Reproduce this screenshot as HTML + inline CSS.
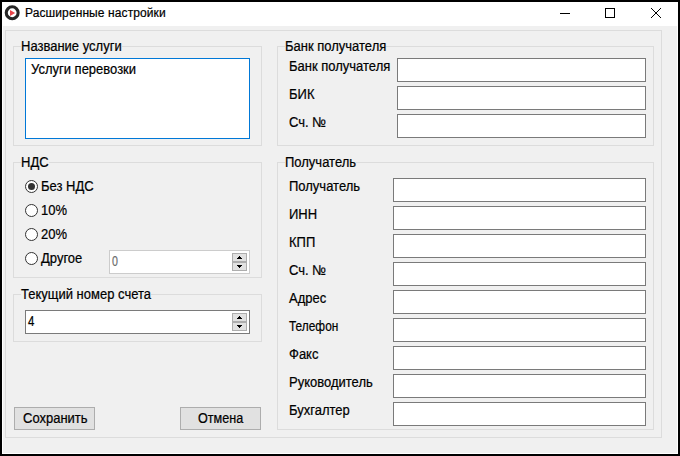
<!DOCTYPE html>
<html><head><meta charset="utf-8">
<style>
html,body{margin:0;padding:0;}
body{width:680px;height:456px;background:#000;position:relative;overflow:hidden;font-family:"Liberation Sans",sans-serif;}
div{position:absolute;box-sizing:border-box;}
.win{left:2px;top:2px;width:676px;height:452px;background:#fff;}
.client{left:3px;top:26px;width:674px;height:427px;background:#f0f0f0;}
.panel{left:5px;top:30px;width:657px;height:408px;border:1px solid #dcdcdc;}
.gb{border:1px solid #dcdcdc;}
.gt{background:#f0f0f0;padding:0;}
.t{font-size:13px;line-height:15px;color:#000;white-space:nowrap;transform:scaleY(1.1);transform-origin:0 12px;-webkit-text-stroke:0.2px currentColor;}
.tb{background:#fff;border:1px solid #7a7a7a;}
.btn{background:#e1e1e1;border:1px solid #adadad;}
.sp{background:#e1e1e1;border:1px solid #adadad;width:15px;height:9px;}
</style></head><body>
<div class="win"></div>
<!-- title bar -->
<svg style="position:absolute;left:0;top:0" width="680" height="26">
  <circle cx="12.2" cy="12.75" r="5.95" fill="#fff" stroke="#262626" stroke-width="3.1"/>
  <path d="M10 10 L15.2 13 L10 16 Z" fill="#e8454a"/>
  <rect x="560" y="13" width="10" height="1" fill="#000"/>
  <rect x="605.5" y="8.5" width="9" height="9" fill="none" stroke="#000" stroke-width="1"/>
  <g fill="#000"><rect x="651" y="8" width="1" height="1"/><rect x="660" y="8" width="1" height="1"/><rect x="652" y="9" width="1" height="1"/><rect x="659" y="9" width="1" height="1"/><rect x="653" y="10" width="1" height="1"/><rect x="658" y="10" width="1" height="1"/><rect x="654" y="11" width="1" height="1"/><rect x="657" y="11" width="1" height="1"/><rect x="655" y="12" width="1" height="1"/><rect x="656" y="12" width="1" height="1"/><rect x="656" y="13" width="1" height="1"/><rect x="655" y="13" width="1" height="1"/><rect x="657" y="14" width="1" height="1"/><rect x="654" y="14" width="1" height="1"/><rect x="658" y="15" width="1" height="1"/><rect x="653" y="15" width="1" height="1"/><rect x="659" y="16" width="1" height="1"/><rect x="652" y="16" width="1" height="1"/><rect x="660" y="17" width="1" height="1"/><rect x="651" y="17" width="1" height="1"/></g>
</svg>
<div class="t" style="left:25px;top:6px;font-size:12px;transform:none;letter-spacing:0.1px;">Расширенные настройки</div>
<div class="client"></div>
<div class="panel"></div>

<!-- Название услуги -->
<div class="gb" style="left:13px;top:46px;width:249px;height:100px;"></div>
<div class="t gt" style="left:21px;top:39px;">Название услуги</div>
<div class="tb" style="left:25px;top:58px;width:225px;height:81px;border-color:#0078d7;"></div>
<div class="t" style="left:31px;top:62px;">Услуги перевозки</div>

<!-- НДС -->
<div class="gb" style="left:13px;top:162px;width:249px;height:116px;"></div>
<div class="t gt" style="left:21px;top:155px;">НДС</div>

<!-- Текущий номер счета -->
<div class="gb" style="left:13px;top:294px;width:249px;height:48px;"></div>
<div class="t gt" style="left:21px;top:287px;">Текущий номер счета</div>
<div class="tb" style="left:25px;top:310px;width:225px;height:24px;"></div>
<div class="t" style="left:28px;top:314px;transform:scale(0.88,1.1);">4</div>
<div class="sp" style="left:232px;top:313px;"></div>
<div class="sp" style="left:232px;top:322px;"></div>

<!-- disabled updown -->
<div class="tb" style="left:109px;top:250px;width:141px;height:24px;border-color:#cccccc;"></div>
<div class="t" style="left:112px;top:254px;color:#6d6d6d;transform:scale(0.82,1.1);">0</div>
<div class="sp" style="left:232px;top:253px;"></div>
<div class="sp" style="left:232px;top:262px;"></div>

<!-- buttons -->
<div class="btn" style="left:14px;top:407px;width:81px;height:23px;"></div>
<div class="t" style="left:23px;top:411px;">Сохранить</div>
<div class="btn" style="left:180px;top:407px;width:81px;height:23px;"></div>
<div class="t" style="left:197.5px;top:411px;transform:scale(0.97,1.1);">Отмена</div>

<!-- Банк получателя -->
<div class="gb" style="left:277px;top:46px;width:377px;height:100px;"></div>
<div class="t gt" style="left:285px;top:39px;">Банк получателя</div>
<div class="t" style="left:289px;top:59px;">Банк получателя</div>
<div class="t" style="left:289px;top:87px;">БИК</div>
<div class="t" style="left:289px;top:115px;">Сч. №</div>
<div class="tb" style="left:397px;top:58px;width:249px;height:24px;"></div>
<div class="tb" style="left:397px;top:86px;width:249px;height:24px;"></div>
<div class="tb" style="left:397px;top:114px;width:249px;height:24px;"></div>

<!-- Получатель -->
<div class="gb" style="left:277px;top:162px;width:377px;height:268px;"></div>
<div class="t gt" style="left:285px;top:155px;">Получатель</div>
<div class="t" style="left:289px;top:179px;">Получатель</div>
<div class="t" style="left:289px;top:207px;">ИНН</div>
<div class="t" style="left:289px;top:235px;">КПП</div>
<div class="t" style="left:289px;top:263px;">Сч. №</div>
<div class="t" style="left:289px;top:291px;">Адрес</div>
<div class="t" style="left:289px;top:319px;transform:scale(0.915,1.1);">Телефон</div>
<div class="t" style="left:289px;top:347px;">Факс</div>
<div class="t" style="left:289px;top:375px;">Руководитель</div>
<div class="t" style="left:289px;top:403px;">Бухгалтер</div>
<div class="tb" style="left:393px;top:178px;width:253px;height:24px;"></div>
<div class="tb" style="left:393px;top:206px;width:253px;height:24px;"></div>
<div class="tb" style="left:393px;top:234px;width:253px;height:24px;"></div>
<div class="tb" style="left:393px;top:262px;width:253px;height:24px;"></div>
<div class="tb" style="left:393px;top:290px;width:253px;height:24px;"></div>
<div class="tb" style="left:393px;top:318px;width:253px;height:24px;"></div>
<div class="tb" style="left:393px;top:346px;width:253px;height:24px;"></div>
<div class="tb" style="left:393px;top:374px;width:253px;height:24px;"></div>
<div class="tb" style="left:393px;top:402px;width:253px;height:24px;"></div>

<!-- radios + arrows -->
<svg style="position:absolute;left:0;top:0" width="680" height="456">
  <g fill="#fff" stroke="#333" stroke-width="1">
    <circle cx="31.5" cy="186.5" r="6"/>
    <circle cx="31.5" cy="210.5" r="6"/>
    <circle cx="31.5" cy="234.5" r="6"/>
    <circle cx="31.5" cy="258.5" r="6"/>
  </g>
  <circle cx="31.5" cy="186.5" r="3.5" fill="#333"/>
  <g fill="#000">
    <rect x="239" y="316" width="1" height="1"/><rect x="238" y="317" width="3" height="1"/><rect x="237" y="318" width="5" height="1"/>
    <rect x="237" y="325" width="5" height="1"/><rect x="238" y="326" width="3" height="1"/><rect x="239" y="327" width="1" height="1"/>
    <rect x="239" y="256" width="1" height="1"/><rect x="238" y="257" width="3" height="1"/><rect x="237" y="258" width="5" height="1"/>
    <rect x="237" y="265" width="5" height="1"/><rect x="238" y="266" width="3" height="1"/><rect x="239" y="267" width="1" height="1"/>
  </g>
</svg>
<div class="t" style="left:41px;top:179px;">Без НДС</div>
<div class="t" style="left:41px;top:203px;">10%</div>
<div class="t" style="left:41px;top:227px;">20%</div>
<div class="t" style="left:41px;top:251px;">Другое</div>
</body></html>
